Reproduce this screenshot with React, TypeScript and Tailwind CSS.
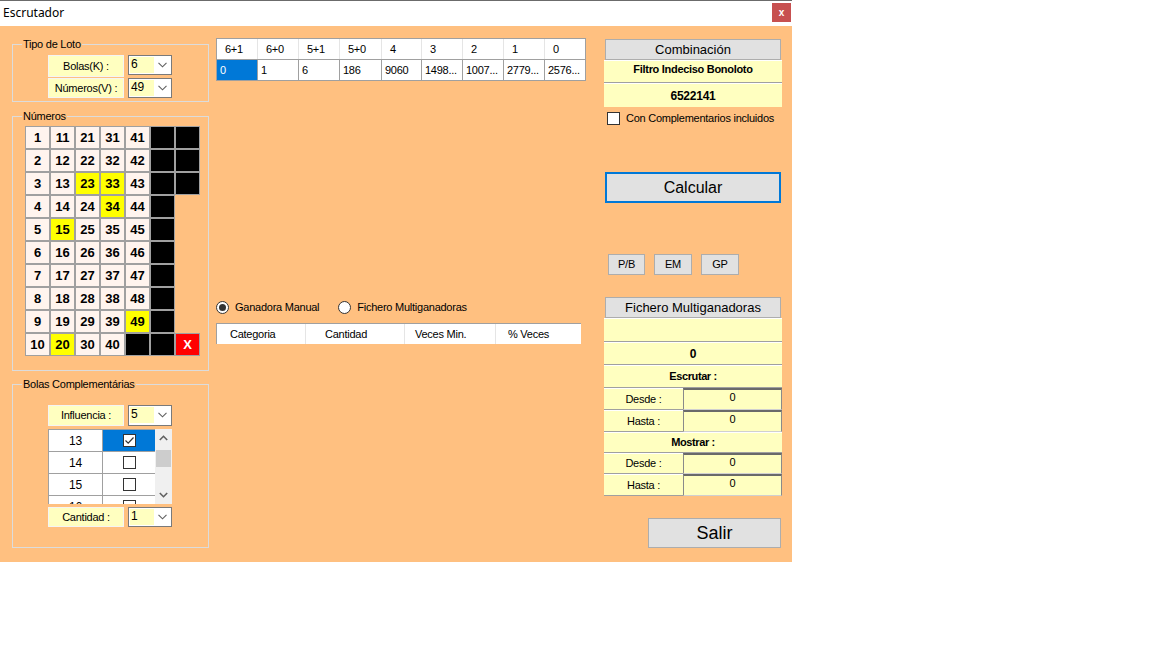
import React from 'react'

type Cell = { kind: 'num'; value: number } | { kind: 'black' } | { kind: 'empty' } | { kind: 'x' }

const yellowNums = new Set([15, 20, 23, 33, 34, 49])

function buildGrid(): Cell[][] {
  const rows: Cell[][] = []
  for (let r = 0; r < 10; r++) {
    const row: Cell[] = []
    for (let c = 0; c < 4; c++) row.push({ kind: 'num', value: r + 1 + c * 10 })
    row.push(r < 9 ? { kind: 'num', value: 41 + r } : { kind: 'black' })
    row.push({ kind: 'black' })
    row.push(r < 3 ? { kind: 'black' } : r === 9 ? { kind: 'x' } : { kind: 'empty' })
    rows.push(row)
  }
  return rows
}

const topCols = [
  { h: '6+1', v: '0', w: 'w-[41px]' },
  { h: '6+0', v: '1', w: 'w-[41px]' },
  { h: '5+1', v: '6', w: 'w-[41px]' },
  { h: '5+0', v: '186', w: 'w-[42px]' },
  { h: '4', v: '9060', w: 'w-[40px]' },
  { h: '3', v: '1498...', w: 'w-[41px]' },
  { h: '2', v: '1007...', w: 'w-[41px]' },
  { h: '1', v: '2779...', w: 'w-[41px]' },
  { h: '0', v: '2576...', w: 'w-[40px]' },
]

function Chevron() {
  return (
    <svg width="9" height="6" viewBox="0 0 9 6" className="shrink-0">
      <path d="M0.5 0.8 L4.5 4.8 L8.5 0.8" fill="none" stroke="#606060" strokeWidth="1.1" />
    </svg>
  )
}

function Combo({ value, h = 'h-[20px]' }: { value: string; h?: string }) {
  return (
    <div className={`w-[44px] ${h} border border-[#7a7a7a] bg-white flex items-start`}>
      <div className="ml-[1px] mt-[1px] w-[24px] h-[16px] bg-[#ffffc0] leading-[14px] pl-[1px] text-[12px]">{value}</div>
      <div className="flex-1 flex justify-center pt-[6px]">
        <Chevron />
      </div>
    </div>
  )
}

function YLabel({ text, h = 'h-[20px]' }: { text: string; h?: string }) {
  return (
    <div className={`w-[76px] ${h} bg-[#ffffc0] border border-[#f4f4f4] flex items-center justify-center`}>
      {text}
    </div>
  )
}

function CheckBox({ checked = false }: { checked?: boolean }) {
  return (
    <div className="w-[13px] h-[13px] shrink-0 border border-[#333333] bg-white flex items-center justify-center">
      {checked && (
        <svg width="11" height="11" viewBox="0 0 11 11">
          <path d="M1.5 5.5 L4.2 8.2 L9.5 2.5" fill="none" stroke="#333333" strokeWidth="1.2" />
        </svg>
      )}
    </div>
  )
}

function Radio({ checked = false }: { checked?: boolean }) {
  return (
    <div className="w-[13px] h-[13px] shrink-0 rounded-full border border-[#333333] bg-white flex items-center justify-center">
      {checked && <div className="w-[7px] h-[7px] rounded-full bg-[#333333]" />}
    </div>
  )
}

function GridCell({ cell }: { cell: Cell }) {
  if (cell.kind === 'empty') return <div className="w-[25px] h-[23px]" />
  if (cell.kind === 'black') return <div className="w-[25px] h-[23px] bg-black border border-[#a0a0a0]" />
  if (cell.kind === 'x')
    return (
      <div className="w-[25px] h-[23px] bg-[#ff0000] border border-[#a0a0a0] flex items-center justify-center text-white font-bold text-[13px]">
        X
      </div>
    )
  const yellow = yellowNums.has(cell.value)
  return (
    <div
      className={`w-[25px] h-[23px] border border-[#a0a0a0] flex items-center justify-center font-bold text-[13px] tracking-normal ${
        yellow ? 'bg-[#ffff00]' : 'bg-[#fff4ee]'
      }`}
    >
      {cell.value}
    </div>
  )
}

function Button({ children, className }: { children: React.ReactNode; className: string }) {
  return (
    <div className={`bg-[#e1e1e1] border border-[#adadad] flex items-center justify-center ${className}`}>{children}</div>
  )
}

function SplitRow({ label, value, h = 'h-[21px]' }: { label: string; value: string; h?: string }) {
  return (
    <div className={`flex ${h}`}>
      <div className="w-[79px] bg-[#ffffc0] border-t border-t-white border-b border-b-[#a0a0a0] flex items-center justify-center">
        {label}
      </div>
      <div className="w-[99px] bg-[#ffffc0] border-t-2 border-t-[#6a6a6a] border-l border-l-[#8a8a8a] border-r border-r-[#8a8a8a] border-b border-b-[#d0d0d0] flex items-start justify-center leading-[15px]">
        {value}
      </div>
    </div>
  )
}

function FullRow({ children, bold = false, h = 'h-[23px]' }: { children?: React.ReactNode; bold?: boolean; h?: string }) {
  return (
    <div
      className={`${h} bg-[#ffffc0] border-t border-t-white border-b border-b-[#a0a0a0] flex items-center justify-center ${
        bold ? 'font-bold tracking-[-0.4px]' : ''
      }`}
    >
      {children}
    </div>
  )
}

export default function App() {
  const grid = buildGrid()

  return (
    <div className="w-[1152px] h-[648px] bg-white text-black text-[11px] tracking-[-0.25px] font-['Liberation_Sans',Arial,sans-serif]">
      <div className="w-[792px]">
        {/* Title bar */}
        <div className="h-[26px] bg-white border-t border-t-[#6b6b6b] flex items-start justify-between">
          <span className="pl-[3px] pt-[4px] text-[12px] leading-[16px] tracking-normal font-['Noto_Sans',sans-serif]">Escrutador</span>
          <div className="mt-[2px] mr-[1px] w-[19px] h-[19px] bg-[#c75050] flex items-center justify-center text-white font-bold text-[10px] leading-none">
            x
          </div>
        </div>

        {/* Body */}
        <div className="h-[536px] bg-[#ffc080] flex items-start">
          {/* Left column */}
          <div className="ml-[12px] mt-[12px] w-[197px] flex flex-col">
            <fieldset className="border border-[#dcdcdc] pt-[4px] pb-[3px]">
              <legend className="ml-[9px] px-[1px] leading-[13px]">Tipo de Loto</legend>
              <div className="ml-[35px] flex flex-col gap-[1px]">
                <div className="flex items-start gap-[4px]">
                  <YLabel text="Bolas(K) :" h="h-[22px]" />
                  <Combo value="6" />
                </div>
                <div className="flex items-start gap-[4px]">
                  <YLabel text="Números(V) :" h="h-[20px]" />
                  <Combo value="49" />
                </div>
              </div>
            </fieldset>

            <fieldset className="mt-[8px] border border-[#dcdcdc] pt-[3px] pb-[14px]">
              <legend className="ml-[9px] px-[1px] leading-[13px]">Números</legend>
              <div className="ml-[12px] flex flex-col">
                {grid.map((row, r) => (
                  <div key={r} className="flex">
                    {row.map((cell, c) => (
                      <GridCell key={c} cell={cell} />
                    ))}
                  </div>
                ))}
              </div>
            </fieldset>

            <fieldset className="mt-[7px] border border-[#dcdcdc] pt-[14px] pb-[20px]">
              <legend className="ml-[9px] px-[1px] leading-[13px]">Bolas Complementárias</legend>
              <div className="ml-[35px] flex flex-col">
                <div className="flex items-start gap-[4px]">
                  <YLabel text="Influencia :" h="h-[21px]" />
                  <Combo value="5" h="h-[21px]" />
                </div>
                <div className="mt-[3px] w-[124px] h-[75px] flex overflow-hidden">
                  <div className="w-[107px] flex flex-col border-l border-[#a0a0a0]">
                    {[13, 14, 15, 16].map((n) => (
                      <div key={n} className="flex h-[22px] shrink-0 border-t border-[#a0a0a0] bg-white">
                        <div className="w-[54px] flex items-center justify-center text-[12px] border-r border-[#a0a0a0]">
                          {n}
                        </div>
                        <div
                          className={`flex-1 flex items-center justify-center ${n === 13 ? 'bg-[#0078d7]' : 'bg-white'}`}
                        >
                          <CheckBox checked={n === 13} />
                        </div>
                      </div>
                    ))}
                  </div>
                  <div className="w-[17px] bg-[#f0f0f0] flex flex-col items-center">
                    <svg width="9" height="6" viewBox="0 0 9 6" className="mt-[6px]">
                      <path d="M0.8 5 L4.5 1.3 L8.2 5" fill="none" stroke="#606060" strokeWidth="1.6" />
                    </svg>
                    <div className="mt-[9px] w-[15px] h-[17px] bg-[#cdcdcd]" />
                    <div className="flex-1" />
                    <svg width="9" height="6" viewBox="0 0 9 6" className="mb-[6px]">
                      <path d="M0.8 1 L4.5 4.7 L8.2 1" fill="none" stroke="#606060" strokeWidth="1.6" />
                    </svg>
                  </div>
                </div>
                <div className="mt-[3px] flex items-start gap-[4px]">
                  <YLabel text="Cantidad :" />
                  <Combo value="1" />
                </div>
              </div>
            </fieldset>
          </div>

          {/* Middle column */}
          <div className="ml-[7px] mt-[12px] w-[370px] flex flex-col">
            <div className="w-[370px] border border-[#a0a0a0] bg-white flex flex-col">
              <div className="flex h-[20px]">
                {topCols.map((c, i) => (
                  <div
                    key={i}
                    className={`${c.w} pl-[8px] flex items-center ${i < topCols.length - 1 ? 'border-r border-[#e5e5e5]' : ''}`}
                  >
                    {c.h}
                  </div>
                ))}
              </div>
              <div className="flex h-[21px] border-t border-[#a0a0a0]">
                {topCols.map((c, i) => (
                  <div
                    key={i}
                    className={`${c.w} pl-[3px] flex items-center ${i < topCols.length - 1 ? 'border-r border-[#a0a0a0]' : ''} ${
                      i === 0 ? 'bg-[#0078d7] text-white' : ''
                    }`}
                  >
                    {c.v}
                  </div>
                ))}
              </div>
            </div>

            <div className="mt-[219px] h-[14px] flex items-center">
              <Radio checked />
              <span className="ml-[6px]">Ganadora Manual</span>
              <div className="ml-[19px]">
                <Radio />
              </div>
              <span className="ml-[6px]">Fichero Multiganadoras</span>
            </div>

            <div className="mt-[9px] w-[365px] h-[21px] bg-white border-t border-l border-[#a0a0a0] flex">
              <div className="w-[89px] pl-[13px] flex items-center border-r border-[#e5e5e5]">Categoria</div>
              <div className="w-[99px] pl-[19px] flex items-center border-r border-[#e5e5e5]">Cantidad</div>
              <div className="w-[91px] pl-[10px] flex items-center border-r border-[#e5e5e5]">Veces Min.</div>
              <div className="w-[85px] pl-[12px] flex items-center">% Veces</div>
            </div>
          </div>

          {/* Right column */}
          <div className="ml-[18px] mt-[13px] w-[178px] flex flex-col">
            <Button className="ml-[1px] w-[176px] h-[21px] text-[13px] tracking-normal">Combinación</Button>
            <div className="h-[23px] bg-[#ffffc0] border-t border-t-white border-b border-b-[#a0a0a0] flex items-start justify-center font-bold tracking-[-0.3px]">
              Filtro Indeciso Bonoloto
            </div>
            <div className="h-[24px] bg-[#ffffc0] border-t border-t-white flex items-center justify-center font-bold text-[12px]">
              6522141
            </div>
            <div className="mt-[5px] ml-[3px] h-[13px] flex items-center">
              <CheckBox />
              <span className="ml-[6px]">Con Complementarios incluidos</span>
            </div>
            <div className="mt-[47px] ml-[1px] w-[176px] h-[31px] bg-[#e1e1e1] border-2 border-[#0078d7] flex items-center justify-center text-[16px] tracking-normal">
              Calcular
            </div>
            <div className="mt-[51px] ml-[4px] flex gap-[9px]">
              <Button className="w-[37px] h-[21px]">P/B</Button>
              <Button className="w-[38px] h-[21px]">EM</Button>
              <Button className="w-[38px] h-[21px]">GP</Button>
            </div>
            <Button className="mt-[22px] ml-[1px] w-[176px] h-[21px] text-[13px] tracking-normal">Fichero Multiganadoras</Button>
            <div className="flex flex-col">
              <FullRow h="h-[24px]" />
              <FullRow bold>
                <span className="text-[12px]">0</span>
              </FullRow>
              <FullRow bold h="h-[23px]">Escrutar :</FullRow>
              <SplitRow label="Desde :" value="0" h="h-[22px]" />
              <SplitRow label="Hasta :" value="0" h="h-[22px]" />
              <FullRow bold h="h-[21px]">Mostrar :</FullRow>
              <SplitRow label="Desde :" value="0" />
              <SplitRow label="Hasta :" value="0" h="h-[22px]" />
            </div>
            <Button className="mt-[22px] ml-[44px] w-[133px] h-[30px] text-[18px] tracking-normal">Salir</Button>
          </div>
        </div>
      </div>
    </div>
  )
}
